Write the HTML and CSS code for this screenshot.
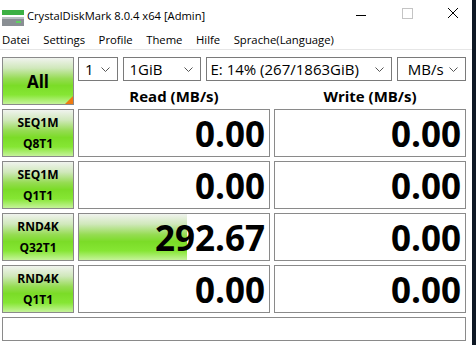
FILE: index.html
```html
<!DOCTYPE html>
<html lang="de">
<head>
  <meta charset="UTF-8">
  <title>CrystalDiskMark 8.0.4 x64 [Admin]</title>
  <link rel="stylesheet" href="styles.css">
</head>
<body>

  <div class="window">
    <div class="titlebar">
      <svg class="app-icon" width="26" height="22" viewBox="0 0 26 22">
        <rect x="2" y="5" width="22" height="5" fill="#3cb043"/>
        <rect x="2" y="12" width="22" height="9" fill="#8a8f94"/>
        <rect x="2" y="12" width="22" height="2" fill="#b9bec2"/>
        <rect x="16" y="16" width="5" height="2" fill="#5fd35f"/>
      </svg>
      <span class="title">CrystalDiskMark 8.0.4 x64 [Admin]</span>
      <div class="controls">
        <svg width="46" height="30" viewBox="0 0 46 30"><line x1="15" y1="15.5" x2="25" y2="15.5" stroke="#000" stroke-width="1"/></svg>
        <svg width="46" height="30" viewBox="0 0 46 30"><rect x="15.5" y="8.5" width="10" height="10" fill="none" stroke="#c4c4c4" stroke-width="1"/></svg>
        <svg width="46" height="30" viewBox="0 0 46 30"><path d="M15 8 L25 18 M25 8 L15 18" stroke="#000" stroke-width="1"/></svg>
      </div>
    </div>

    <div class="menubar">
      <span>Datei</span>
      <span>Settings</span>
      <span>Profile</span>
      <span>Theme</span>
      <span>Hilfe</span>
      <span>Sprache(Language)</span>
    </div>

    <div class="main">
      <div class="btn btn-all">All<span class="corner"></span></div>

      <div class="top-right">
        <div class="selects">
          <div class="select sel-count">1<svg class="chev" width="9" height="5" viewBox="0 0 9 5"><path d="M0.5 0.5 L4.5 4.5 L8.5 0.5" fill="none" stroke="#555" stroke-width="1"/></svg></div>
          <div class="select sel-size">1GiB<svg class="chev" width="9" height="5" viewBox="0 0 9 5"><path d="M0.5 0.5 L4.5 4.5 L8.5 0.5" fill="none" stroke="#555" stroke-width="1"/></svg></div>
          <div class="select sel-drive">E: 14% (267/1863GiB)<svg class="chev" width="9" height="5" viewBox="0 0 9 5"><path d="M0.5 0.5 L4.5 4.5 L8.5 0.5" fill="none" stroke="#555" stroke-width="1"/></svg></div>
          <div class="select sel-unit">MB/s<svg class="chev" width="9" height="5" viewBox="0 0 9 5"><path d="M0.5 0.5 L4.5 4.5 L8.5 0.5" fill="none" stroke="#555" stroke-width="1"/></svg></div>
        </div>
        <div class="headers">
          <div class="head">Read (MB/s)</div>
          <div class="head">Write (MB/s)</div>
        </div>
      </div>

      <div class="btn btn-test">SEQ1M<br>Q8T1</div>
      <div class="cell"><span class="value">0.00</span></div>
      <div class="cell"><span class="value">0.00</span></div>

      <div class="btn btn-test">SEQ1M<br>Q1T1</div>
      <div class="cell"><span class="value">0.00</span></div>
      <div class="cell"><span class="value">0.00</span></div>

      <div class="btn btn-test">RND4K<br>Q32T1</div>
      <div class="cell"><div class="bar" style="width: 57%"></div><span class="value">292.67</span></div>
      <div class="cell"><span class="value">0.00</span></div>

      <div class="btn btn-test">RND4K<br>Q1T1</div>
      <div class="cell"><span class="value">0.00</span></div>
      <div class="cell"><span class="value">0.00</span></div>

      <div class="comment"></div>
    </div>
  </div>

</body>
</html>
```

FILE: styles.css
```css
body {
  margin: 0;
  padding: 0;
  background-color: #0e1824; /* desktop behind the window */
  font-family: 'Open Sans', 'Noto Sans', sans-serif;
  color: #000;
  height: 345px;
  overflow: hidden;
}

.window {
  width: 472px;
  height: 345px;
  background-color: #ffffff;
}

.titlebar {
  height: 30px;
  display: flex;
  align-items: center;
}

.app-icon {
  margin-left: 0;
  margin-top: 1px;
}

.title {
  margin-left: 1px;
  font-size: 11.2px;
}

.controls {
  margin-left: auto;
  display: flex;
  margin-right: -7px;
}

.menubar {
  height: 19px;
  display: flex;
  gap: 13.5px;
  padding-left: 2px;
  font-size: 11.3px;
  line-height: 19px;
  border-bottom: 1px solid #e6e6e6;
}

.main {
  display: grid;
  grid-template-columns: 72px 192px 192px;
  grid-template-rows: 48px 48px 48px 48px 48px 24px;
  column-gap: 4px;
  row-gap: 4px;
  padding: 7px 0 0 2px;
}

.btn {
  box-sizing: border-box;
  border: 1px solid #8a8a8a;
  background: linear-gradient(#f0f3ee 0%, #d0e8bb 22%, #95dc52 45%, #7bdc27 60%, #86e634 80%, #c5f39a 100%);
  display: flex;
  align-items: center;
  justify-content: center;
  text-align: center;
  font-weight: bold;
  position: relative;
}

.btn-all {
  font-size: 17px;
}

.corner {
  position: absolute;
  right: 0;
  bottom: 0;
  width: 0;
  height: 0;
  border-left: 8px solid transparent;
  border-bottom: 8px solid #f07a10;
}

.btn-test {
  font-size: 12px;
  line-height: 21px;
}

.top-right {
  grid-column: 2 / 4;
  display: flex;
  flex-direction: column;
}

.selects {
  display: flex;
  gap: 5px;
  height: 24px;
}

.select {
  box-sizing: border-box;
  border: 1px solid #7a7a7a;
  height: 24px;
  display: flex;
  align-items: center;
  padding-left: 6px;
  font-size: 15px;
}

.chev {
  margin-left: auto;
  margin-right: 7px;
}

.sel-count { width: 40px; }
.sel-size { width: 80px; }
.sel-drive { width: 188px; padding-left: 3px; }
.sel-unit { width: 70px; padding-left: 10px; }

.headers {
  display: grid;
  grid-template-columns: 192px 192px;
  column-gap: 4px;
  height: 24px;
}

.head {
  text-align: center;
  font-weight: bold;
  font-size: 15px;
  line-height: 30px;
}

.cell {
  box-sizing: border-box;
  border: 1px solid #8a8a8a;
  background-color: #fff;
  position: relative;
  display: flex;
  align-items: center;
  justify-content: flex-end;
  padding-right: 4px;
}

.bar {
  position: absolute;
  left: 0;
  top: 0;
  bottom: 0;
  background: linear-gradient(#f0f3ee 0%, #d0e8bb 22%, #95dc52 45%, #7bdc27 60%, #86e634 80%, #c5f39a 100%);
}

.value {
  position: relative;
  font-size: 35px;
  font-weight: bold;
  line-height: 1;
}

.comment {
  grid-column: 1 / 4;
  box-sizing: border-box;
  border: 1px solid #8a8a8a;
}
```
